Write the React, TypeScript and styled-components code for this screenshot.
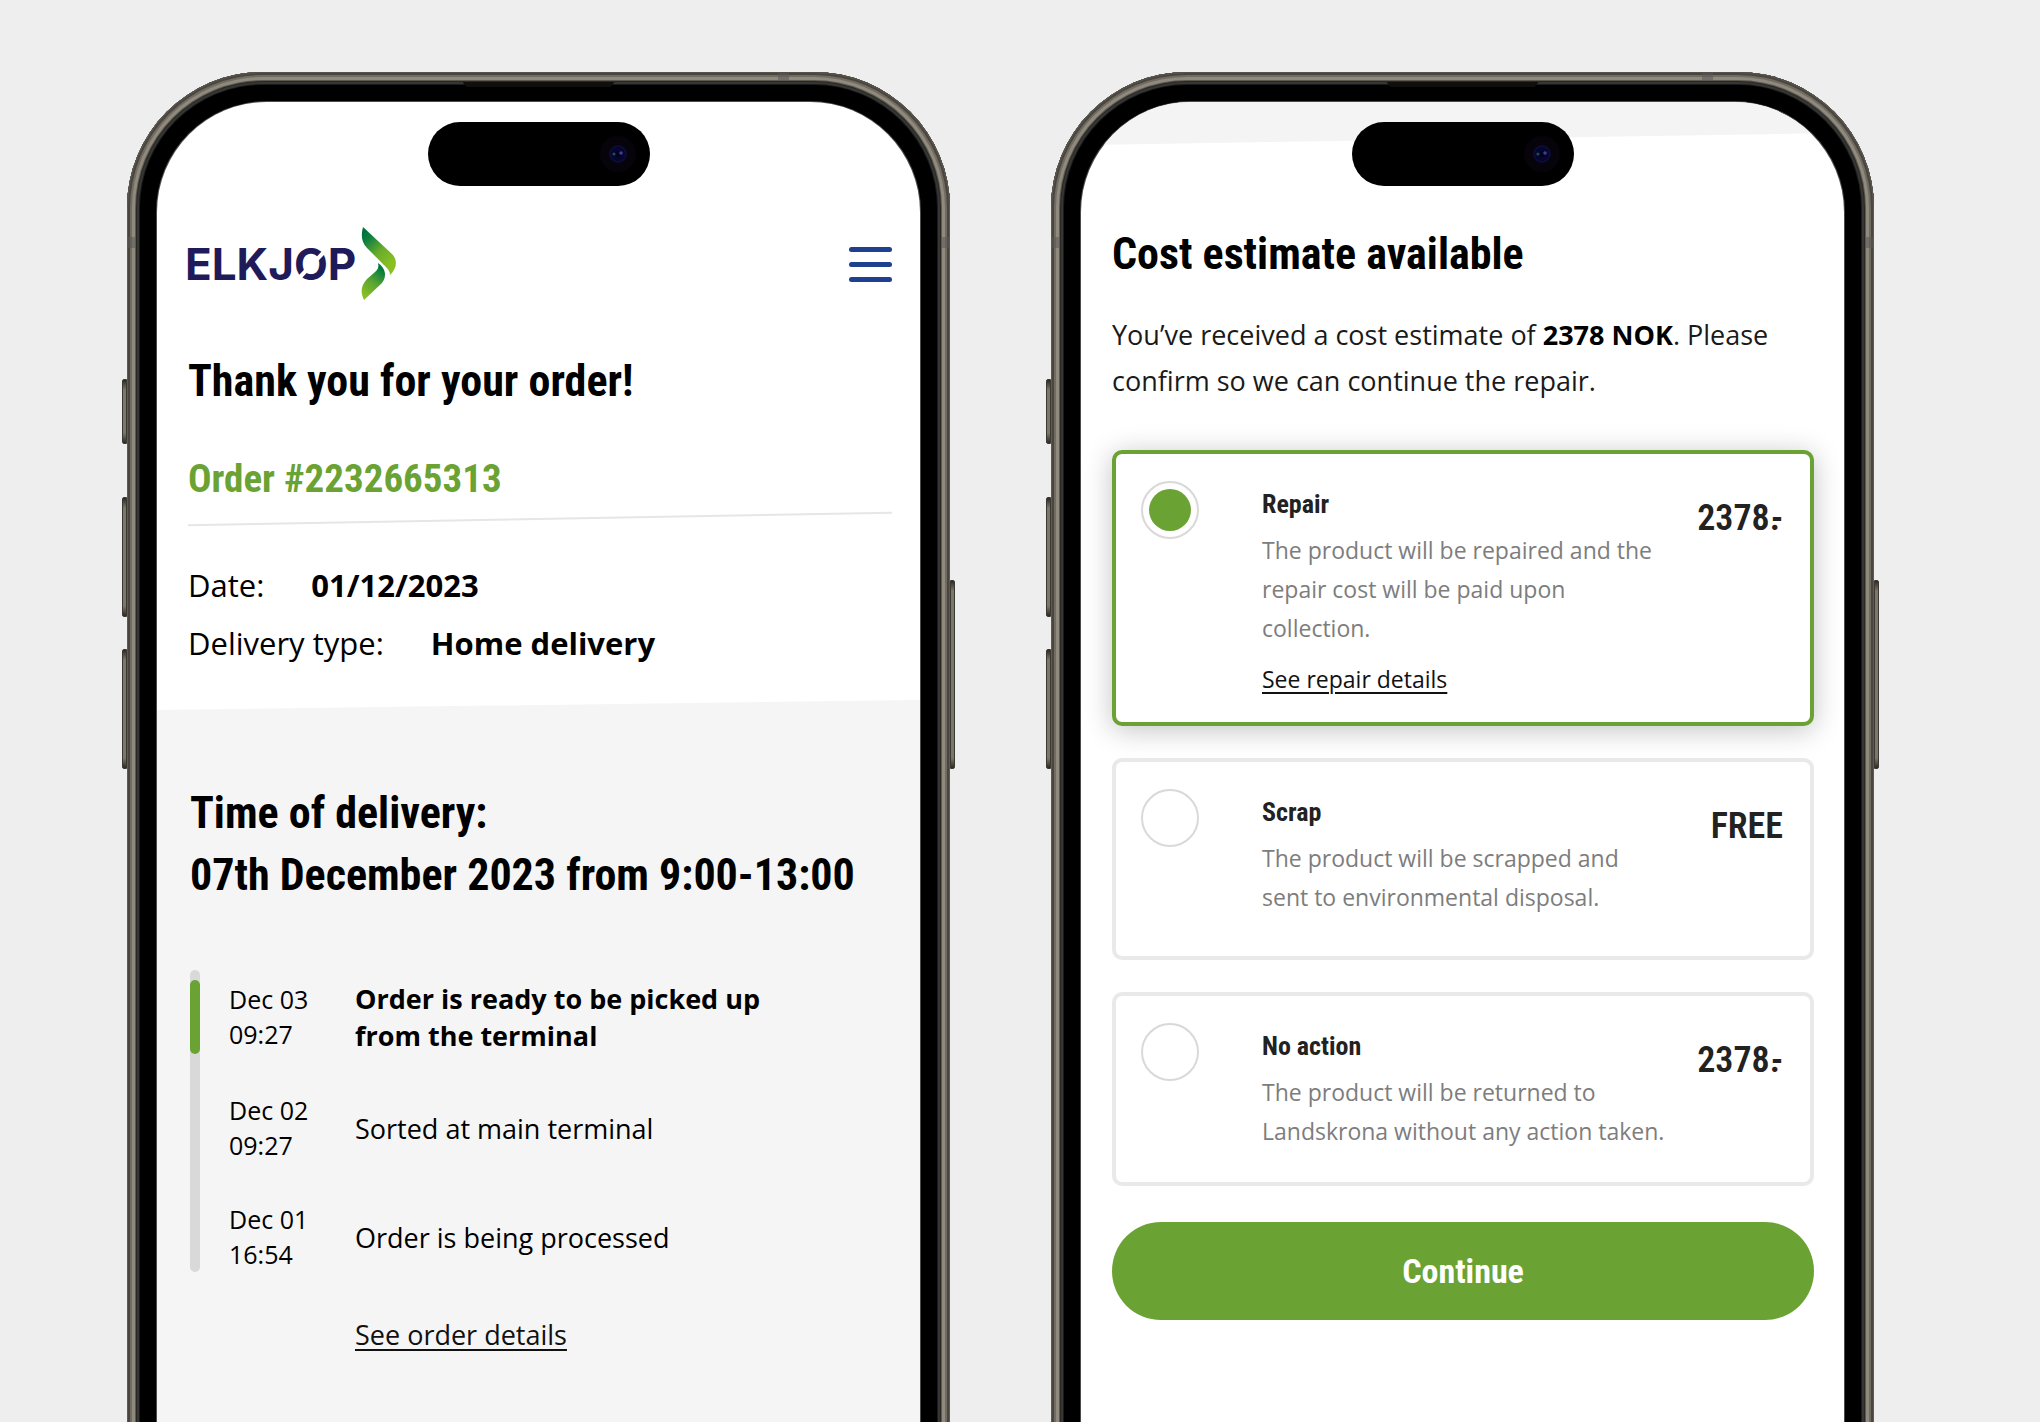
import React, { useState } from "react";
import styled, { createGlobalStyle } from "styled-components";

const green = "#6aa334";
const headFont = `"Roboto Condensed", Roboto, sans-serif`;
const bodyFont = `"Open Sans", "Noto Sans", sans-serif`;

const GlobalStyle = createGlobalStyle`
  *, *::before, *::after { box-sizing: border-box; }
  body { margin: 0; background: #eeeeee; color: #000; font-family: ${bodyFont}; }
  h1, h2, h3, p, dl, dd, ol, fieldset { margin: 0; padding: 0; }
`;

const Stage = styled.main`
  display: grid;
  grid-template-columns: 1fr 1fr;
  gap: 101px;
  min-height: 100vh;
  padding: 72px 166px 0 127px;
  background: #eeeeee;
  overflow: hidden;
`;

/* ---------- device ---------- */

const Device = styled.section`
  position: relative;
  min-width: 0;
  margin-bottom: -20px;
  padding: 30px 30px 0;
  border-radius: 136px 136px 0 0;
  background: #000;
  box-shadow:
    inset 0 1px 0 0 #55524b,
    inset 0 0 0 1px #5f5b53,
    inset 0 0 0 3px #4a463f,
    inset 0 0 0 5px #716c62,
    inset 0 0 0 8px #8f897e,
    inset 0 0 0 9px #5d594f,
    inset 0 0 0 10px #2a2823,
    inset 0 0 0 12px #353635,
    inset 0 0 0 13px #1a1b1b;
`;

const SideKey = styled.span<{ $side: "left" | "right"; $top: number; $length: number }>`
  position: absolute;
  top: ${(p) => p.$top}px;
  ${(p) => p.$side}: -5px;
  width: 5px;
  height: ${(p) => p.$length}px;
  border: 1px solid #3c3933;
  border-radius: ${(p) => (p.$side === "left" ? "2px 0 0 2px" : "0 2px 2px 0")};
  background: linear-gradient(#2d2a25, #7c776c 10px, #7c776c calc(100% - 10px), #2d2a25);
`;

const Antenna = styled.span<{ $edge: "top" | "left" | "right" }>`
  position: absolute;
  background: rgba(90, 90, 86, 0.55);
  ${(p) =>
    p.$edge === "top"
      ? "top: 1px; right: 161px; width: 11px; height: 8px;"
      : `top: 165px; ${p.$edge}: 1px; width: 8px; height: 11px;`}
`;

const Earpiece = styled.span`
  position: absolute;
  top: 10px;
  left: 50%;
  width: 152px;
  height: 5px;
  margin-left: -76px;
  background: #0f0f0e;
  clip-path: polygon(0 0, 100% 0, calc(100% - 4px) 100%, 4px 100%);
`;

const Screen = styled.div`
  position: relative;
  height: 100%;
  border-radius: 110px 110px 0 0;
  background: #fff;
  box-shadow: 0 0 0 1px #4b4b4b;
  overflow: hidden;
  display: flex;
  flex-direction: column;
`;

const Island = styled.div`
  position: absolute;
  top: 20px;
  left: 50%;
  width: 222px;
  height: 64px;
  margin-left: -111px;
  border-radius: 32px;
  background: #000;
  display: flex;
  align-items: center;
  justify-content: flex-end;
  padding-right: 14px;
  z-index: 1;
`;

function Phone({ label, children }: { label: string; children: React.ReactNode }) {
  return (
    <Device aria-label={label}>
      <SideKey $side="left" $top={307} $length={65} />
      <SideKey $side="left" $top={425} $length={120} />
      <SideKey $side="left" $top={577} $length={120} />
      <SideKey $side="right" $top={508} $length={189} />
      <Antenna $edge="top" />
      <Antenna $edge="left" />
      <Antenna $edge="right" />
      <Earpiece />
      <Screen>
        <Island>
          <svg width="36" height="36" viewBox="0 0 36 36" aria-hidden="true">
            <circle cx="18" cy="18" r="18" fill="#07030a" />
            <circle cx="18" cy="18" r="9" fill="#0c0c35" />
            <circle cx="18" cy="18" r="7" fill="#050530" />
            <circle cx="18" cy="18" r="3" fill="#02021a" />
            <circle cx="14" cy="18" r="1.6" fill="#17505c" />
            <circle cx="21" cy="17" r="1.8" fill="#403d94" />
          </svg>
        </Island>
        {children}
      </Screen>
    </Device>
  );
}

/* ---------- shared type ---------- */

const Heading = styled.h1`
  font: 700 44px/62px ${headFont};
`;

const TextLink = styled.a`
  color: #111;
  text-decoration: underline;
  text-decoration-thickness: 2px;
  text-underline-offset: 4px;
`;

/* ---------- order screen ---------- */

const OrderTop = styled.div`
  padding: 125px 28px 28px 31px;
`;

const TopBar = styled.header`
  display: flex;
  align-items: center;
  justify-content: space-between;
  margin-bottom: 49px;
`;

const LogoMark = styled.svg`
  display: block;
  overflow: visible;
`;

const MenuButton = styled.button`
  display: flex;
  flex-direction: column;
  gap: 10px;
  padding: 0;
  border: 0;
  background: none;
`;

const MenuLine = styled.span`
  width: 43px;
  height: 5px;
  border-radius: 3px;
  background: #1f3f8f;
`;

const OrderNumber = styled.h2`
  margin-top: 47px;
  font: 700 39px/40px ${headFont};
  color: ${green};
`;

const Divider = styled.hr`
  height: 2px;
  margin: 19px 0 36px;
  border: 0;
  background: #e6e6e6;
  transform: skewY(-1deg);
`;

const FactRow = styled.div`
  display: flex;
  gap: 47px;
  font-size: 31px;
  line-height: 58px;
`;

const FactValue = styled.dd`
  font-weight: 700;
`;

const DeliverySection = styled.section`
  flex: 1;
  padding: 82px 30px 66px 33px;
  background: #f5f5f5;
  clip-path: polygon(0 10px, 100% 0, 100% 100%, 0 100%);
`;

const Timeline = styled.div`
  display: grid;
  grid-template-columns: 10px 1fr;
  column-gap: 29px;
  margin-top: 64px;
`;

const Track = styled.div`
  padding-top: 10px;
  border-radius: 5px;
  background: #d9d9d9;
`;

const TrackFill = styled.div`
  height: 74px;
  border-radius: 5px;
  background: ${green};
`;

const Events = styled.ol`
  display: grid;
  gap: 39px;
  padding-top: 10px;
  list-style: none;
`;

const Event = styled.li`
  display: grid;
  grid-template-columns: 126px minmax(0, 420px);
  align-items: center;
`;

const EventTime = styled.time`
  font-size: 25px;
  line-height: 35px;
`;

const EventText = styled.p<{ $current?: boolean }>`
  font-size: 27px;
  line-height: 37px;
  font-weight: ${(p) => (p.$current ? 700 : 400)};
`;

const OrderLink = styled(TextLink)`
  display: inline-block;
  margin: 44px 0 0 165px;
  font-size: 27px;
  line-height: 38px;
`;

const events = [
  { day: "Dec 03", time: "09:27", text: "Order is ready to be picked up from the terminal", current: true },
  { day: "Dec 02", time: "09:27", text: "Sorted at main terminal" },
  { day: "Dec 01", time: "16:54", text: "Order is being processed" },
];

function Logo() {
  return (
    <LogoMark width="210" height="74" viewBox="0 0 210 74" role="img" aria-label="Elkjop">
      <defs>
        <linearGradient id="upper" gradientUnits="userSpaceOnUse" x1="174" y1="6" x2="204" y2="36">
          <stop offset="0" stopColor="#00713b" />
          <stop offset="0.2" stopColor="#0f7f40" />
          <stop offset="0.6" stopColor="#6aac2c" />
          <stop offset="1" stopColor="#8abf22" />
        </linearGradient>
        <linearGradient id="lower" gradientUnits="userSpaceOnUse" x1="194" y1="42" x2="175" y2="68">
          <stop offset="0" stopColor="#00793e" />
          <stop offset="0.5" stopColor="#5aa532" />
          <stop offset="1" stopColor="#8abf22" />
        </linearGradient>
      </defs>
      <text x="-3" y="53" fontFamily="Inter, sans-serif" fontWeight="700" fontSize="44" fill="#1f1a5a">
        ELKJOP
      </text>
      <path d="M111 51 L136 25" stroke="#fff" strokeWidth="4" />
      <path
        d="M175 0 L204 27 C210 33 209 41 202 48 C202 44 200 42 196 38 L179 21 C173 15 173 7 175 0 Z"
        fill="url(#upper)"
      />
      <path
        d="M190 36 C198 41 199 50 194 56 L176 73 C172 65 173 59 179 52 L187 45 C190 42 191 40 190 36 Z"
        fill="url(#lower)"
      />
    </LogoMark>
  );
}

function OrderScreen() {
  return (
    <Phone label="Order status">
      <OrderTop>
        <TopBar>
          <Logo />
          <MenuButton type="button" aria-label="Menu">
            <MenuLine />
            <MenuLine />
            <MenuLine />
          </MenuButton>
        </TopBar>
        <Heading>Thank you for your order!</Heading>
        <OrderNumber>Order #2232665313</OrderNumber>
        <Divider />
        <dl>
          <FactRow>
            <dt>Date:</dt>
            <FactValue>01/12/2023</FactValue>
          </FactRow>
          <FactRow>
            <dt>Delivery type:</dt>
            <FactValue>Home delivery</FactValue>
          </FactRow>
        </dl>
      </OrderTop>
      <DeliverySection>
        <Heading as="h2">
          Time of delivery:
          <br />
          07th December 2023 from 9:00-13:00
        </Heading>
        <Timeline>
          <Track>
            <TrackFill />
          </Track>
          <Events>
            {events.map((e) => (
              <Event key={e.day}>
                <EventTime>
                  {e.day}
                  <br />
                  {e.time}
                </EventTime>
                <EventText $current={e.current}>{e.text}</EventText>
              </Event>
            ))}
          </Events>
        </Timeline>
        <OrderLink href="#order">See order details</OrderLink>
      </DeliverySection>
    </Phone>
  );
}

/* ---------- estimate screen ---------- */

const Wedge = styled.div`
  height: 43px;
  background: #f4f4f4;
  clip-path: polygon(0 0, 100% 0, 100% 31px, 0 100%);
`;

const EstimateBody = styled.form`
  display: flex;
  flex-direction: column;
  padding: 78px 30px 66px 31px;
`;

const Intro = styled.p`
  margin: 27px 0 46px;
  font-size: 27px;
  line-height: 46px;
  color: #1a1a1a;

  strong {
    color: #000;
  }
`;

const Options = styled.fieldset`
  display: grid;
  gap: 32px;
  min-width: 0;
  border: 0;
`;

const Option = styled.div<{ $selected: boolean; $minHeight: number }>`
  display: grid;
  grid-template-columns: 121px minmax(0, 1fr) 115px;
  align-items: start;
  min-height: ${(p) => p.$minHeight}px;
  padding: 27px 27px 23px 25px;
  border: 4px solid ${(p) => (p.$selected ? green : "#e9e9e9")};
  border-radius: 10px;
  background: #fff;
  box-shadow: ${(p) => (p.$selected ? "0 4px 28px rgba(0, 0, 0, 0.24)" : "none")};
`;

const Radio = styled.input`
  appearance: none;
  width: 58px;
  height: 58px;
  margin: 0;
  border: 2px solid #d9d9d9;
  border-radius: 50%;
  background: #fff;

  &:checked {
    padding: 6px;
    background: ${green} content-box;
  }
`;

const OptionTitle = styled.label`
  display: block;
  font: 700 26px/46px ${headFont};
  color: #222;
`;

const OptionText = styled.p`
  margin-top: 4px;
  font-size: 23px;
  line-height: 39px;
  color: #7d7d7d;
`;

const RepairLink = styled(TextLink)`
  display: inline-block;
  margin-top: 11px;
  font-size: 23px;
  line-height: 40px;
`;

const Price = styled.div`
  padding-top: 17px;
  font: 600 36px/40px ${headFont};
  color: #222;
  text-align: right;
  white-space: nowrap;
`;

const Dash = styled.span`
  margin-left: -9px;
`;

const ContinueButton = styled.button`
  height: 98px;
  margin-top: 36px;
  border: 0;
  border-radius: 49px;
  background: ${green};
  color: #fff;
  font: 700 34px/40px ${headFont};
`;

const options = [
  {
    id: "repair",
    title: "Repair",
    text: "The product will be repaired and the repair cost will be paid upon collection.",
    link: "See repair details",
    price: "2378",
    minHeight: 276,
  },
  {
    id: "scrap",
    title: "Scrap",
    text: "The product will be scrapped and sent to environmental disposal.",
    minHeight: 202,
  },
  {
    id: "none",
    title: "No action",
    text: "The product will be returned to Landskrona without any action taken.",
    price: "2378",
    minHeight: 194,
  },
];

function EstimateScreen() {
  const [choice, setChoice] = useState("repair");
  return (
    <Phone label="Repair cost estimate">
      <Wedge />
      <EstimateBody onSubmit={(e) => e.preventDefault()}>
        <Heading>Cost estimate available</Heading>
        <Intro>
          You’ve received a cost estimate of <strong>2378 NOK</strong>. Please confirm so we can continue the repair.
        </Intro>
        <Options aria-label="Repair options">
          {options.map((o) => (
            <Option key={o.id} $selected={choice === o.id} $minHeight={o.minHeight}>
              <Radio
                type="radio"
                name="option"
                id={o.id}
                checked={choice === o.id}
                onChange={() => setChoice(o.id)}
              />
              <div>
                <OptionTitle htmlFor={o.id}>{o.title}</OptionTitle>
                <OptionText>{o.text}</OptionText>
                {o.link && <RepairLink href="#repair">{o.link}</RepairLink>}
              </div>
              <Price>
                {o.price ? (
                  <>
                    {o.price}.<Dash>-</Dash>
                  </>
                ) : (
                  "FREE"
                )}
              </Price>
            </Option>
          ))}
        </Options>
        <ContinueButton type="submit">Continue</ContinueButton>
      </EstimateBody>
    </Phone>
  );
}

export default function App() {
  return (
    <>
      <GlobalStyle />
      <Stage>
        <OrderScreen />
        <EstimateScreen />
      </Stage>
    </>
  );
}
